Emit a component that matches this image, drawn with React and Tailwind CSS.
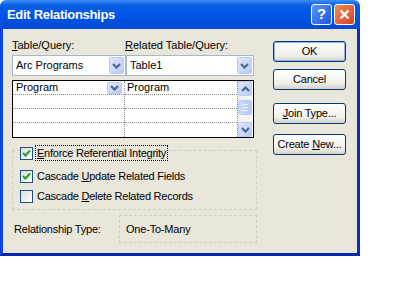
import React from "react";

const font = { fontFamily: '"Liberation Sans", Arial, sans-serif' };

const Chevron = ({ up = false }) => (
  <svg width="9" height="6" viewBox="0 0 9 6">
    <path
      d={up ? "M1 5 L4.5 1.5 L8 5" : "M1 1 L4.5 4.5 L8 1"}
      fill="none"
      stroke="#4d6185"
      strokeWidth="2"
    />
  </svg>
);

const ArrowBtn = ({ up = false, className = "" }) => (
  <div
    className={`flex items-center justify-center rounded-[2px] border border-[#b9cbf3] bg-[linear-gradient(135deg,#dfe8ff,#b6c9f7)] ${className}`}
  >
    <Chevron up={up} />
  </div>
);

const Combo = ({ text, width }) => (
  <div className={`flex h-[21px] ${width} items-center border border-[#a9b8c9] bg-white pl-[3px] pr-[1px]`}>
    <span className="flex-1 text-[11px] text-black">{text}</span>
    <ArrowBtn className="h-[17px] w-[15px]" />
  </div>
);

const Check = ({ checked, children, focus }) => (
  <div className="flex h-[16px] items-center">
    <div className="flex h-[13px] w-[13px] items-center justify-center border border-[#1c5180] bg-[linear-gradient(135deg,#dcdcd7,#ffffff)]">
      {checked && (
        <svg width="9" height="9" viewBox="0 0 9 9">
          <path d="M1 4 L3.5 6.5 L8 1.5" fill="none" stroke="#21a121" strokeWidth="2" />
        </svg>
      )}
    </div>
    <div
      className={`ml-[2px] px-[1px] text-[11px] leading-[14px] tracking-[-0.25px] text-black ${
        focus ? "border border-dotted border-black" : "border border-transparent"
      }`}
    >
      {children}
    </div>
  </div>
);

const Btn = ({ children, def }) => (
  <div
    className={`flex h-[21px] w-[73px] items-center justify-center rounded-[3px] border border-[#003c74] bg-[linear-gradient(180deg,#ffffff,#f0f0ea_70%,#d6d0c5)] text-[11px] tracking-[-0.2px] text-black ${
      def ? "shadow-[inset_0_0_0_1px_#8fb2f0]" : ""
    }`}
  >
    <span>{children}</span>
  </div>
);

export default function App() {
  return (
    <div className="h-[300px] w-[400px] bg-white" style={font}>
      <div className="flex h-[256px] w-[360px] flex-col">
        {/* title bar */}
        <div className="flex h-[29px] items-center rounded-t-[6px] bg-[linear-gradient(180deg,#3d8ff5_0%,#0a5fe6_18%,#0055e5_55%,#0349d6_100%)] pl-[7px] pr-[5px]">
          <span className="flex-1 text-[13px] font-bold tracking-[-0.3px] text-white">
            Edit Relationships
          </span>
          <div className="flex h-[21px] w-[21px] items-center justify-center rounded-[3px] border border-white bg-[linear-gradient(135deg,#5a93f5,#1d56dc)] text-[15px] font-bold text-white">
            ?
          </div>
          <div className="ml-[2px] flex h-[21px] w-[21px] items-center justify-center rounded-[3px] border border-white bg-[linear-gradient(135deg,#ee8a62,#d9441c)]">
            <svg width="11" height="11" viewBox="0 0 11 11">
              <path d="M1.5 1.5 L9.5 9.5 M9.5 1.5 L1.5 9.5" stroke="#fff" strokeWidth="2.4" />
            </svg>
          </div>
        </div>

        {/* body */}
        <div className="flex flex-1 border-x-[3px] border-b-[3px] border-l-[#0b46e0] border-r-[#0a2ebc] border-b-[#0426b0] bg-[#e9e6dc]">
          {/* left column */}
          <div className="flex w-[254px] flex-col pl-[9px] pt-[10px]">
            <div className="flex h-[13px] text-[11px] leading-[13px] text-black">
              <span className="w-[113px]">
                <u>T</u>able/Query:
              </span>
              <span>
                <u>R</u>elated Table/Query:
              </span>
            </div>
            <div className="mt-[3px] flex">
              <Combo text="Arc Programs" width="w-[114px]" />
              <Combo text="Table1" width="w-[128px]" />
            </div>

            {/* grid */}
            <div className="mt-[4px] flex h-[58px] w-[242px] border border-black bg-white">
              <div className="flex w-[112px] flex-col border-r border-dotted border-[#8a8a8a]">
                <div className="flex h-[14px] items-center border-b border-dotted border-[#8a8a8a] pl-[3px] pr-[2px]">
                  <span className="flex-1 text-[11px]">Program</span>
                  <ArrowBtn className="h-[12px] w-[15px]" />
                </div>
                <div className="h-[14px] border-b border-dotted border-[#8a8a8a]" />
                <div className="h-[14px] border-b border-dotted border-[#8a8a8a]" />
                <div className="h-[14px]" />
              </div>
              <div className="flex w-[113px] flex-col border-r border-dotted border-[#8a8a8a]">
                <div className="flex h-[14px] items-center border-b border-dotted border-[#8a8a8a] pl-[2px]">
                  <span className="text-[11px]">Program</span>
                </div>
                <div className="h-[14px] border-b border-dotted border-[#8a8a8a]" />
                <div className="h-[14px] border-b border-dotted border-[#8a8a8a]" />
                <div className="h-[14px]" />
              </div>
              <div className="flex w-[14px] flex-col bg-[#f4f3ee]">
                <ArrowBtn up className="h-[15px] w-[14px]" />
                <div className="mt-[4px] flex h-[15px] w-[14px] flex-col items-center justify-center gap-[2px] rounded-[2px] border border-[#b9cbf3] bg-[linear-gradient(90deg,#cbd8fb,#b6c9f7)]">
                  <div className="h-px w-[6px] bg-[#eef3ff]" />
                  <div className="h-px w-[6px] bg-[#eef3ff]" />
                  <div className="h-px w-[6px] bg-[#eef3ff]" />
                </div>
                <div className="flex-1" />
                <ArrowBtn className="h-[15px] w-[14px]" />
              </div>
            </div>

            {/* checkboxes */}
            <div className="mt-[12px] flex h-[60px] w-[245px] flex-col border border-dashed border-[#d3cfbd] pl-[7px]">
              <div className="-mt-[6px]">
                <Check checked focus>
                  <u>E</u>nforce Referential Integrity
                </Check>
              </div>
              <div className="mt-[7px]">
                <Check checked>
                  Cascade <u>U</u>pdate Related Fields
                </Check>
              </div>
              <div className="mt-[4px]">
                <Check>
                  Cascade <u>D</u>elete Related Records
                </Check>
              </div>
            </div>

            <div className="mt-[5px] flex h-[28px] items-center">
              <span className="w-[107px] pl-[2px] text-[11px] tracking-[-0.2px]">Relationship Type:</span>
              <div className="flex h-[28px] w-[138px] items-center border border-dashed border-[#d3cfbd] pl-[6px] text-[11px] tracking-[-0.2px]">
                One-To-Many
              </div>
            </div>
          </div>

          {/* right column */}
          <div className="ml-[16px] flex flex-col pt-[12px]">
            <Btn def>OK</Btn>
            <div className="mt-[7px]">
              <Btn>Cancel</Btn>
            </div>
            <div className="mt-[13px]">
              <Btn>
                <u>J</u>oin Type...
              </Btn>
            </div>
            <div className="mt-[10px]">
              <Btn>
                Create <u>N</u>ew...
              </Btn>
            </div>
          </div>
        </div>
      </div>
    </div>
  );
}
